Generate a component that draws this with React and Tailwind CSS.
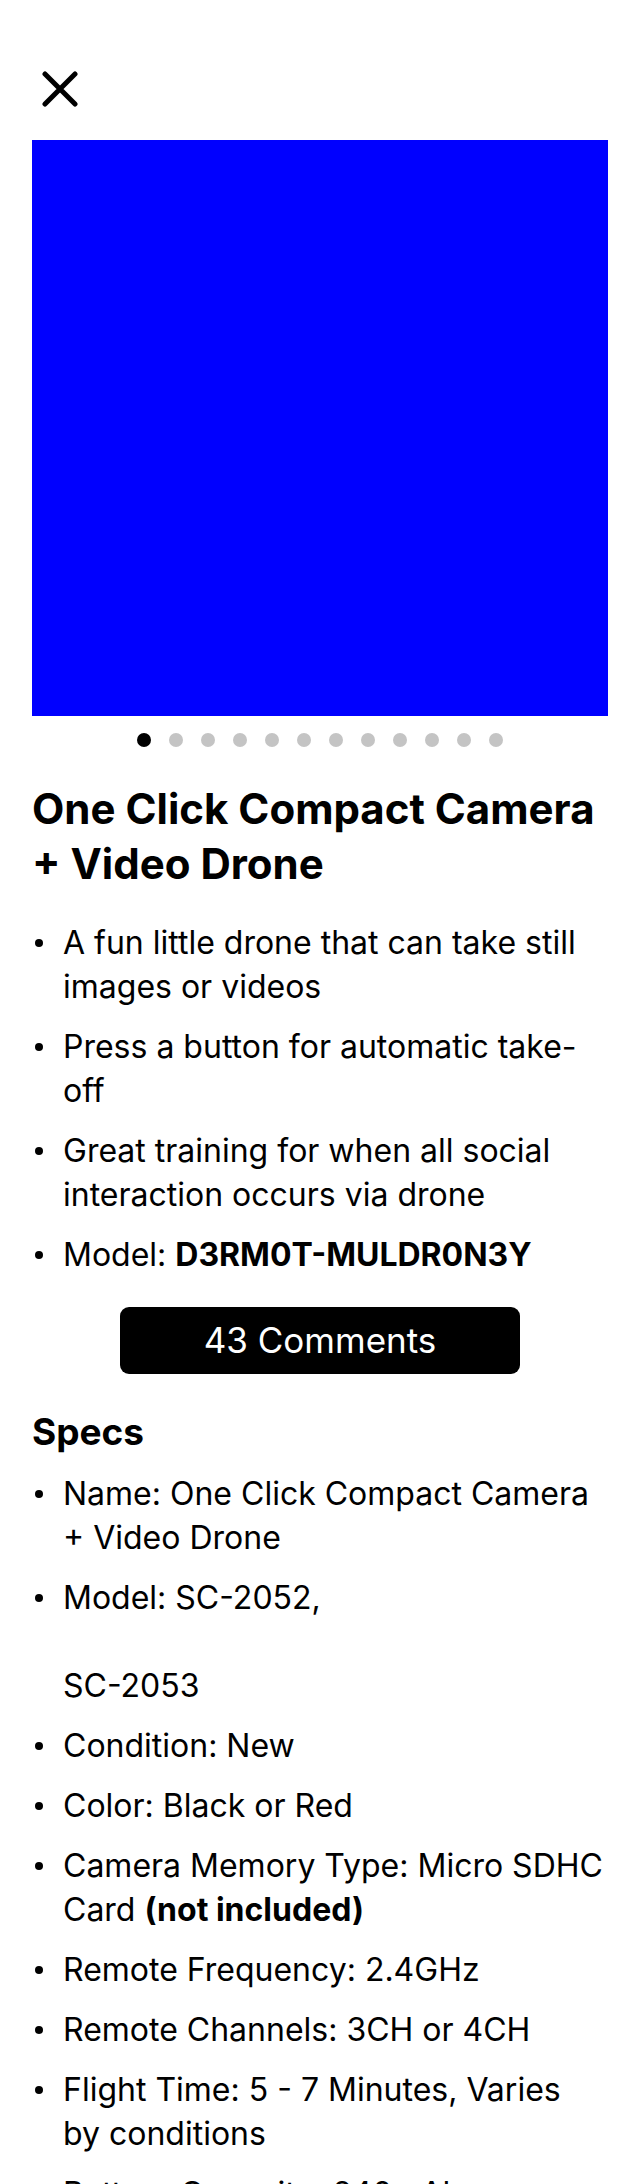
const features = [
  'A fun little drone that can take still images or videos',
  'Press a button for automatic take-off',
  'Great training for when all social interaction occurs via drone',
]

const specs = [
  'Name: One Click Compact Camera + Video Drone',
  <>Model: SC-2052,<br /><br />SC-2053</>,
  'Condition: New',
  'Color: Black or Red',
  <>Camera Memory Type: Micro SDHC Card <span className="font-bold">(not included)</span></>,
  'Remote Frequency: 2.4GHz',
  'Remote Channels: 3CH or 4CH',
  'Flight Time: 5 - 7 Minutes, Varies by\u00a0conditions',
  'Battery Capacity: 240mAh',
  'Charging Time: 50 - 60 Minutes',
]

const Bullet = ({ children }) => (
  <li className="flex">
    <div className="flex h-[44px] w-[31px] shrink-0 items-center pl-[3px]">
      <div className="h-[8px] w-[8px] rounded-full bg-black" />
    </div>
    <div className="min-w-0">{children}</div>
  </li>
)

const App = () => {
  return (
    <div className="min-h-screen bg-white px-8 text-black" style={{ fontFamily: 'Inter, "Noto Sans", sans-serif' }}>
      <div className="flex h-[140px] items-center pt-[38px]">
        <button className="ml-[10px] flex h-[36px] w-[36px] items-center justify-center">
          <svg viewBox="0 0 36 36" className="h-[36px] w-[36px]" fill="none" stroke="black" strokeWidth="5" strokeLinecap="round">
            <path d="M3 3 L33 33 M33 3 L3 33" />
          </svg>
        </button>
      </div>

      <div className="aspect-square w-full bg-[#0000ff]" />

      <div className="mt-[17px] flex justify-center gap-[18px]">
        {Array.from({ length: 12 }).map((_, i) => (
          <div key={i} className={`h-[14px] w-[14px] rounded-full ${i === 0 ? 'bg-black' : 'bg-[#c4c4c4]'}`} />
        ))}
      </div>

      <h1 className="mt-[34px] text-[42px] font-bold leading-[55px]">
        One Click Compact Camera + Video Drone
      </h1>

      <ul className="mt-[30px] flex flex-col gap-[16px] text-[32px] leading-[44px]">
        {features.map((f) => (
          <Bullet key={f}>{f}</Bullet>
        ))}
        <Bullet>
          Model: <span className="font-bold">D3RM0T-MULDR0N3Y</span>
        </Bullet>
      </ul>

      <div className="mt-[30px] flex justify-center">
        <button className="flex h-[67px] w-[400px] items-center justify-center rounded-[9px] bg-black text-[35px] text-white">
          43 Comments
        </button>
      </div>

      <h2 className="mt-[36px] text-[37px] font-bold leading-[44px]">Specs</h2>

      <ul className="mt-[18px] flex flex-col gap-[16px] pb-10 text-[32px] leading-[44px]">
        {specs.map((s, i) => (
          <Bullet key={i}>{s}</Bullet>
        ))}
      </ul>
    </div>
  )
}

export default App
